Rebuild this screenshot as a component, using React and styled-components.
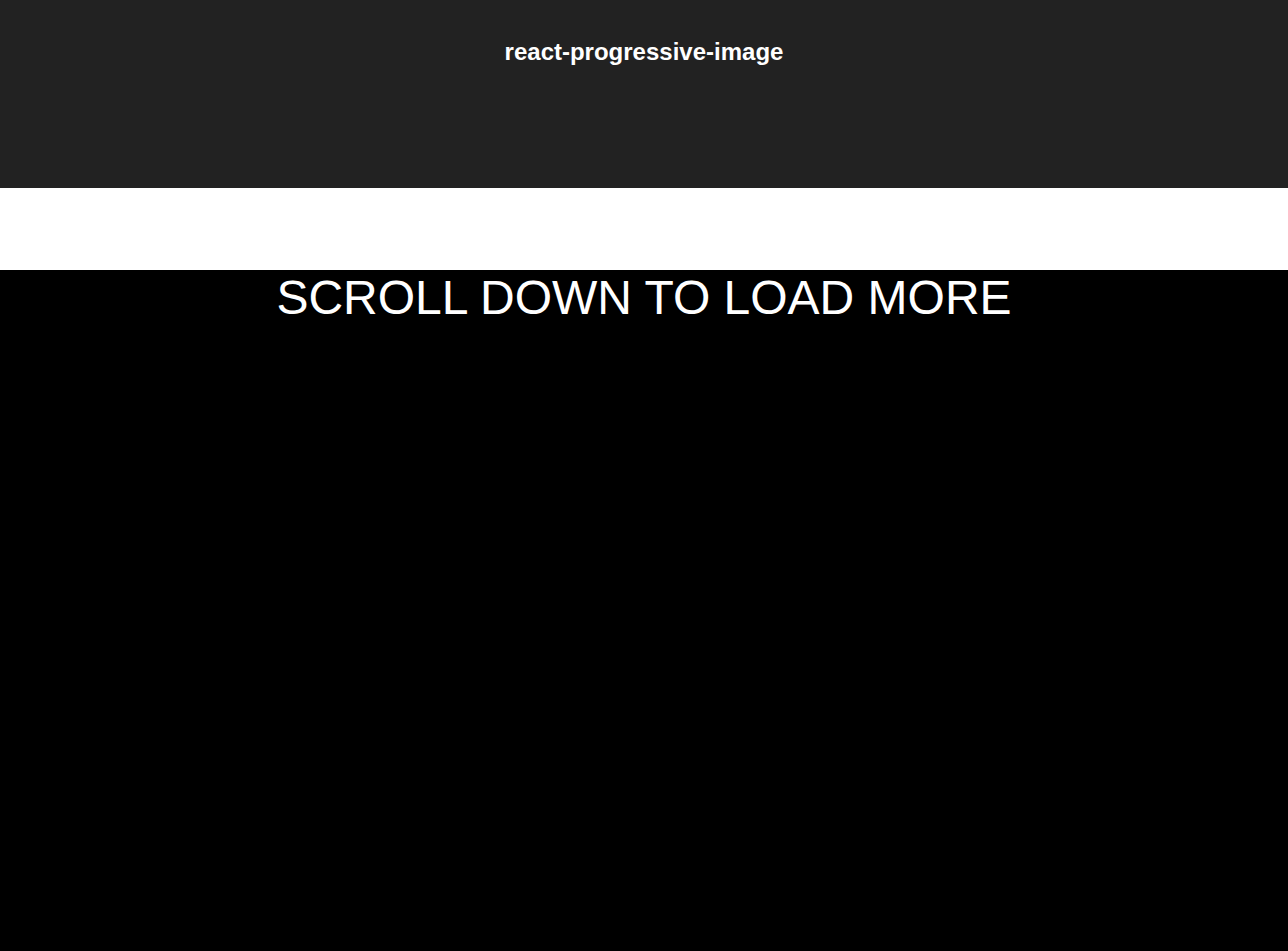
import React from 'react';
import styled, { createGlobalStyle } from 'styled-components';

const GlobalStyle = createGlobalStyle`
  html, body {
    margin: 0;
    padding: 0;
    background: #000;
  }
  body {
    font-family: "Liberation Sans", Arial, sans-serif;
  }
`;

const Page = styled.div`
  display: flex;
  flex-direction: column;
  min-height: 951px;
`;

const Header = styled.header`
  height: 188px;
  box-sizing: border-box;
  padding-top: 38px;
  background: #222;
  color: #fff;
  text-align: center;
`;

const Title = styled.h2`
  margin: 0;
  font-size: 24px;
  font-weight: bold;
`;

const Spacer = styled.div`
  height: 82px;
  background: #fff;
`;

const Feed = styled.main`
  flex: 1;
  background: #000;
  color: #fff;
  text-align: center;
`;

const Prompt = styled.div`
  font-size: 48px;
`;

const App = () => (
  <Page>
    <GlobalStyle />
    <Header>
      <Title>react-progressive-image</Title>
    </Header>
    <Spacer />
    <Feed>
      <Prompt>SCROLL DOWN TO LOAD MORE</Prompt>
    </Feed>
  </Page>
);

export default App;
